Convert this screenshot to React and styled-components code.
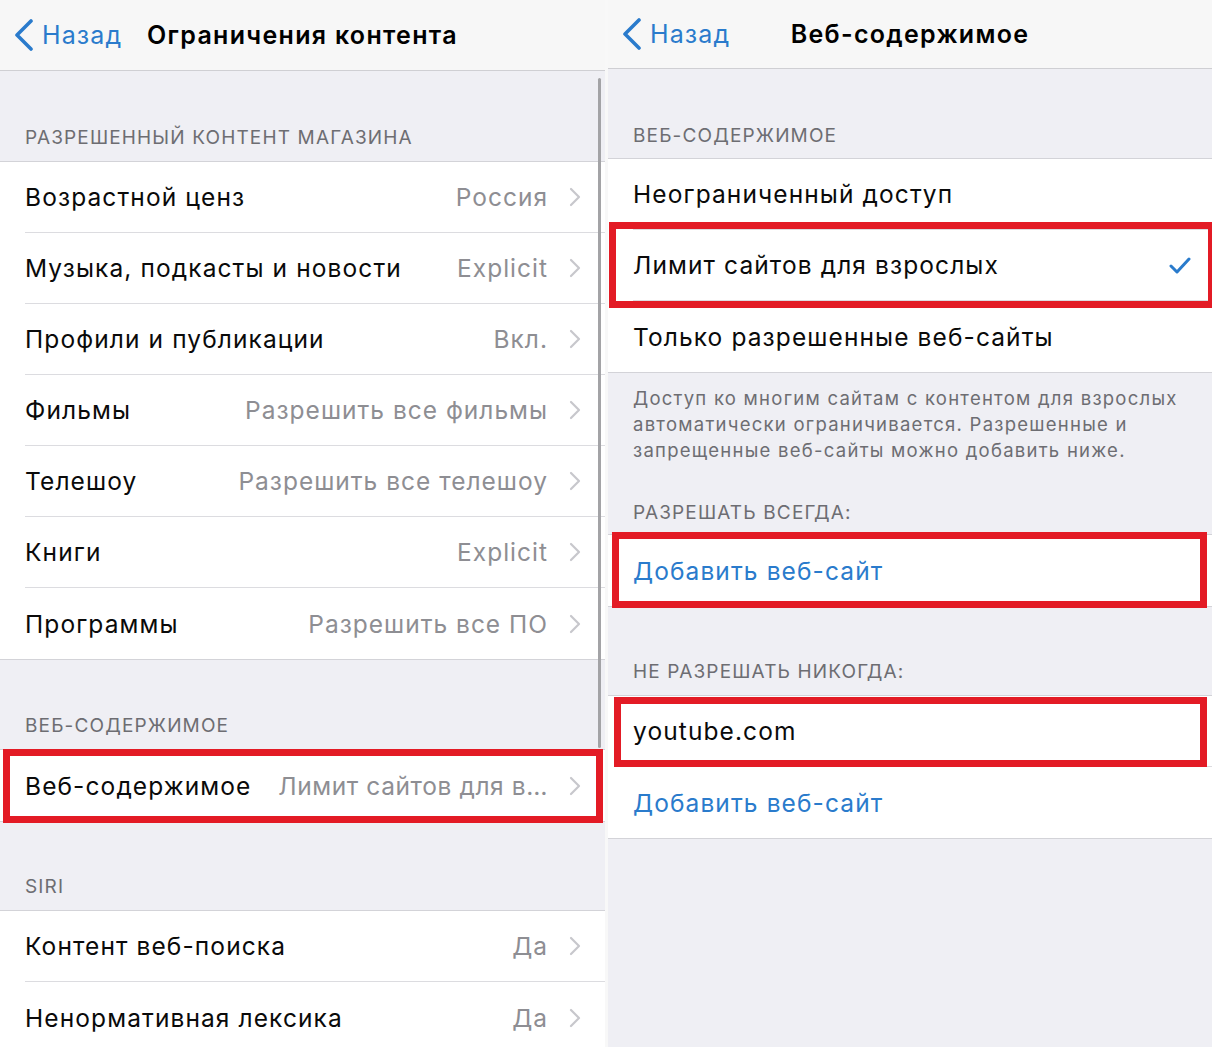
import React from 'react';
import styled, { createGlobalStyle } from 'styled-components';

const BLUE = '#2a7bcc';
const RED = '#e31b25';

const GlobalStyle = createGlobalStyle`
  html, body { margin: 0; padding: 0; background: #fff; }
  body { font-family: Inter, "Noto Sans", sans-serif; -webkit-font-smoothing: antialiased; }
`;

const Screen = styled.div`
  display: flex;
  width: 1212px;
  height: 1047px;
  overflow: hidden;
  background: #fff;
`;

const Pane = styled.div`
  position: relative;
  flex: none;
  width: ${p => p.$w}px;
  background: #efeff4;
  display: flex;
  flex-direction: column;
  overflow: hidden;
  & > * { flex-shrink: 0; }
`;

const Divider = styled.div`
  flex: none;
  width: 3px;
  background: #f8f8f8;
`;

const NavBar = styled.div`
  box-sizing: border-box;
  height: ${p => p.$h}px;
  background: #f7f7f7;
  border-bottom: 1px solid #cfcfd3;
  display: grid;
  grid-template-columns: 1fr auto 1fr;
  align-items: center;
  padding: 0 14px;
`;

const Back = styled.div`
  display: flex;
  align-items: center;
  gap: 8px;
  color: ${BLUE};
  font-size: 25px;
  letter-spacing: 1.1px;
`;

const Title = styled.div`
  font-size: 25px;
  font-weight: 600;
  color: #000;
  letter-spacing: 1.3px;
`;

const SectionHeader = styled.div`
  box-sizing: border-box;
  height: ${p => p.$h}px;
  display: flex;
  align-items: flex-end;
  padding: 0 25px ${p => p.$pb ?? 12}px;
  font-size: 19px;
  line-height: 22px;
  color: #6d6d72;
  text-transform: uppercase;
  letter-spacing: 1.15px;
`;

const Footer = styled.div`
  padding: 12px 25px 0;
  font-size: 18.5px;
  line-height: 26px;
  color: #6d6d72;
  letter-spacing: 1.25px;
`;

const Group = styled.div`
  background: #fff;
  border-top: 1px solid #d3d3d8;
  border-bottom: 1px solid #d3d3d8;
`;

const Row = styled.div`
  position: relative;
  height: 71px;
  padding-left: 25px;
  ${p => p.$mark && `
    &::after {
      content: '';
      position: absolute;
      z-index: 2;
      top: ${p.$mark[0]}px;
      right: ${p.$mark[1]}px;
      bottom: ${p.$mark[2]}px;
      left: ${p.$mark[3]}px;
      border: 7px solid ${RED};
      pointer-events: none;
    }
  `}
`;

const RowBody = styled.div`
  box-sizing: border-box;
  height: 100%;
  display: flex;
  align-items: center;
  gap: 21px;
  padding-right: ${p => p.$pr ?? 24}px;
  border-bottom: ${p => (p.$last ? 'none' : '1px solid #dcdce0')};
`;

const Label = styled.div`
  flex: none;
  font-size: 24.5px;
  letter-spacing: 1.1px;
  color: ${p => (p.$link ? BLUE : '#0a0a0a')};
  white-space: nowrap;
`;

const Value = styled.div`
  flex: 1 0 auto;
  text-align: right;
  font-size: 24.5px;
  letter-spacing: ${p => (p.$tight ? 0.6 : 1)}px;
  color: #8e8e93;
  white-space: nowrap;
`;

const Spacer = styled.div`
  flex: 1;
`;

const ScrollIndicator = styled.div`
  position: absolute;
  top: 78px;
  right: 4px;
  width: 3px;
  height: 670px;
  border-radius: 2px;
  background: #a3a3a6;
`;

const BackChevron = () => (
  <svg width="20" height="32" viewBox="0 0 20 32">
    <path d="M17 2 L3 16 L17 30" fill="none" stroke={BLUE} strokeWidth="3.6" strokeLinecap="round" strokeLinejoin="round" />
  </svg>
);

const Chevron = () => (
  <svg width="12" height="20" viewBox="0 0 12 20" style={{ flex: 'none' }}>
    <path d="M2 2 L10 10 L2 18" fill="none" stroke="#c7c7cc" strokeWidth="2.2" strokeLinecap="round" strokeLinejoin="round" />
  </svg>
);

const Check = () => (
  <svg width="22" height="18" viewBox="0 0 22 18" style={{ flex: 'none' }}>
    <path d="M2 10 L8 16 L20 3" fill="none" stroke={BLUE} strokeWidth="3" strokeLinecap="round" strokeLinejoin="round" />
  </svg>
);

const DetailRow = ({ label, value, last, mark, tight }) => (
  <Row $mark={mark}>
    <RowBody $last={last}>
      <Label>{label}</Label>
      <Value $tight={tight}>{value}</Value>
      <Chevron />
    </RowBody>
  </Row>
);

const Nav = ({ h, title }) => (
  <NavBar $h={h}>
    <Back>
      <BackChevron />
      Назад
    </Back>
    <Title>{title}</Title>
    <div />
  </NavBar>
);

export default function App() {
  return (
    <>
      <GlobalStyle />
      <Screen>
        <Pane $w={605}>
          <Nav h={71} title="Ограничения контента" />
          <SectionHeader $h={90}>Разрешенный контент магазина</SectionHeader>
          <Group>
            <DetailRow label="Возрастной ценз" value="Россия" />
            <DetailRow label="Музыка, подкасты и новости" value="Explicit" />
            <DetailRow label="Профили и публикации" value="Вкл." />
            <DetailRow label="Фильмы" value="Разрешить все фильмы" />
            <DetailRow label="Телешоу" value="Разрешить все телешоу" />
            <DetailRow label="Книги" value="Explicit" />
            <DetailRow label="Программы" value="Разрешить все ПО" last />
          </Group>
          <SectionHeader $h={89}>Веб-содержимое</SectionHeader>
          <Group>
            <DetailRow label="Веб-содержимое" value="Лимит сайтов для в…" tight last mark={[-1, 2, -2, 3]} />
          </Group>
          <SectionHeader $h={88}>Siri</SectionHeader>
          <Group>
            <DetailRow label="Контент веб-поиска" value="Да" />
            <DetailRow label="Ненормативная лексика" value="Да" last />
          </Group>
          <ScrollIndicator />
        </Pane>
        <Divider />
        <Pane $w={604}>
          <Nav h={69} title="Веб-содержимое" />
          <SectionHeader $h={89} $pb={11}>Веб-содержимое</SectionHeader>
          <Group>
            <Row>
              <RowBody>
                <Label>Неограниченный доступ</Label>
              </RowBody>
            </Row>
            <Row $mark={[-8, -3, -7, 1]}>
              <RowBody $pr={21}>
                <Label>Лимит сайтов для взрослых</Label>
                <Spacer />
                <Check />
              </RowBody>
            </Row>
            <Row>
              <RowBody $last>
                <Label>Только разрешенные веб-сайты</Label>
              </RowBody>
            </Row>
          </Group>
          <Footer>
            Доступ ко многим сайтам с контентом для взрослых<br />
            автоматически ограничивается. Разрешенные и<br />
            запрещенные веб-сайты можно добавить ниже.
          </Footer>
          <SectionHeader $h={71} $pb={10}>Разрешать всегда:</SectionHeader>
          <Group>
            <Row $mark={[-3, 5, -2, 4]}>
              <RowBody $last>
                <Label $link>Добавить веб-сайт</Label>
              </RowBody>
            </Row>
          </Group>
          <SectionHeader $h={88}>Не разрешать никогда:</SectionHeader>
          <Group>
            <Row $mark={[1, 5, 0, 6]}>
              <RowBody>
                <Label>youtube.com</Label>
              </RowBody>
            </Row>
            <Row>
              <RowBody $last>
                <Label $link>Добавить веб-сайт</Label>
              </RowBody>
            </Row>
          </Group>
        </Pane>
      </Screen>
    </>
  );
}
